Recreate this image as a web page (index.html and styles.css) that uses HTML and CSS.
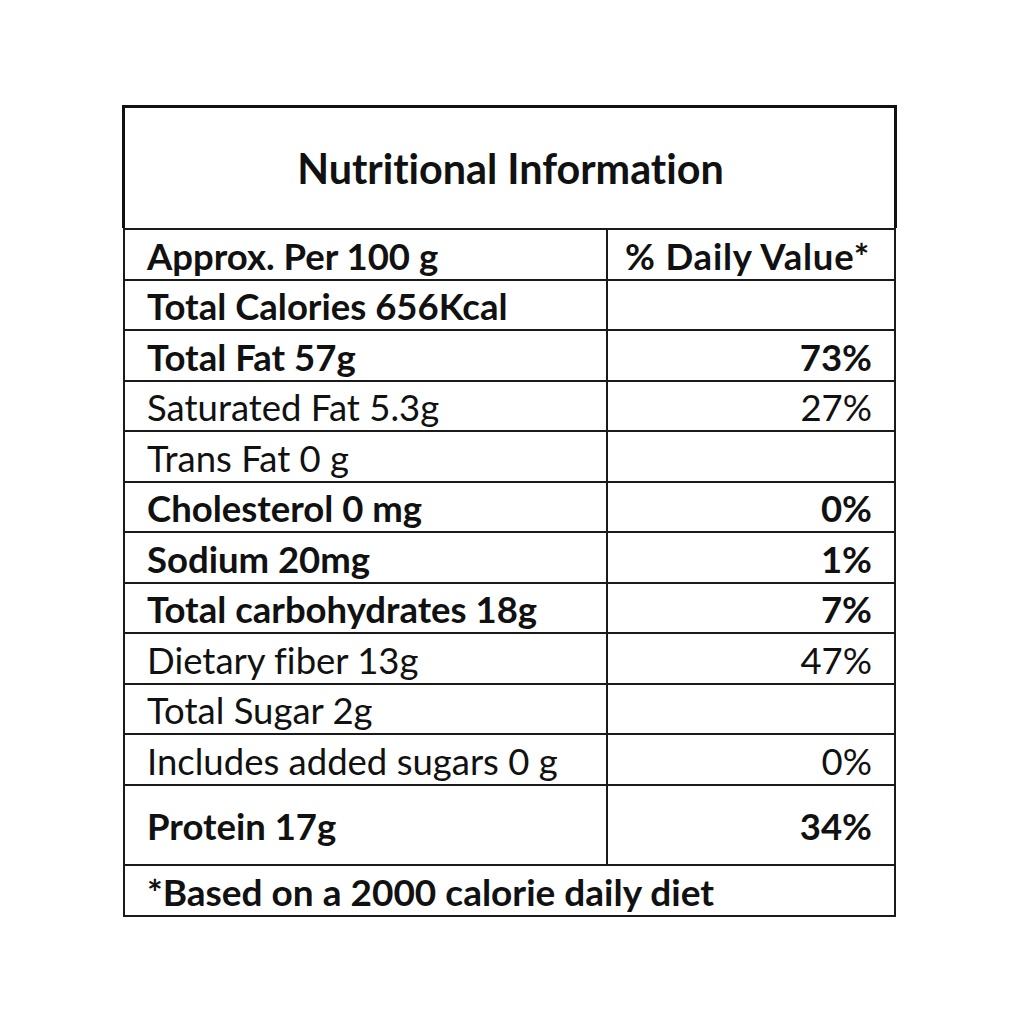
FILE: index.html
```html
<!DOCTYPE html>
<html lang="en">
<head>
<meta charset="utf-8">
<title>Nutritional Information</title>
<link rel="stylesheet" href="styles.css">
</head>
<body>
<div class="label">
  <div class="label-head"><h1 class="title">Nutritional Information</h1></div>
  <div class="facts">
    <div class="row bold"><div class="name">Approx. Per 100 g</div><div class="dv wide">% Daily Value*</div></div>
    <div class="row bold"><div class="name">Total Calories 656Kcal</div><div class="dv"></div></div>
    <div class="row bold"><div class="name">Total Fat 57g</div><div class="dv">73%</div></div>
    <div class="row"><div class="name">Saturated Fat 5.3g</div><div class="dv">27%</div></div>
    <div class="row"><div class="name">Trans Fat 0 g</div><div class="dv"></div></div>
    <div class="row bold"><div class="name">Cholesterol 0 mg</div><div class="dv">0%</div></div>
    <div class="row bold"><div class="name">Sodium 20mg</div><div class="dv">1%</div></div>
    <div class="row bold"><div class="name">Total carbohydrates 18g</div><div class="dv">7%</div></div>
    <div class="row"><div class="name">Dietary fiber 13g</div><div class="dv">47%</div></div>
    <div class="row"><div class="name">Total Sugar 2g</div><div class="dv"></div></div>
    <div class="row"><div class="name">Includes added sugars 0 g</div><div class="dv">0%</div></div>
    <div class="row bold tall"><div class="name">Protein 17g</div><div class="dv">34%</div></div>
    <div class="foot bold">*Based on a 2000 calorie daily diet</div>
  </div>
</div>
</body>
</html>
```
FILE: styles.css
```css
html, body {
  margin: 0;
  padding: 0;
  background: #ffffff;
}
body {
  font-family: Lato, "Open Sans", "Liberation Sans", sans-serif;
  font-variant-ligatures: none;
  color: #111111;
}
.label {
  margin: 105px 0 0 122px;
  width: 775px;
}
.label-head {
  height: 120px;
  border: 3px solid #111111;
  border-bottom: none;
  display: flex;
  align-items: center;
  justify-content: center;
}
.title {
  margin: 0;
  padding: 2px 0 0 2px;
  font-size: 41.3px;
  font-weight: 700;
  line-height: 1;
}
.facts {
  margin: 0 1px;
  border: 2px solid #1a1a1a;
}
.row {
  display: grid;
  grid-template-columns: 483px 1fr;
  height: 48.55px;
  border-bottom: 2px solid #1a1a1a;
  font-size: 36.5px;
  font-weight: 400;
}
.row.tall {
  height: 78px;
}
.bold {
  font-weight: 700;
}
.name, .dv {
  display: flex;
  align-items: center;
  padding-top: 3px;
  line-height: 1;
}
.name {
  padding-left: 22px;
  border-right: 2px solid #1a1a1a;
}
.dv {
  justify-content: flex-end;
  padding-right: 22px;
}
.dv.wide {
  padding-right: 24px;
  letter-spacing: 0.8px;
}
.foot {
  height: 47px;
  display: flex;
  align-items: center;
  padding: 2px 0 0 22px;
  font-size: 37px;
  line-height: 1;
}
```
